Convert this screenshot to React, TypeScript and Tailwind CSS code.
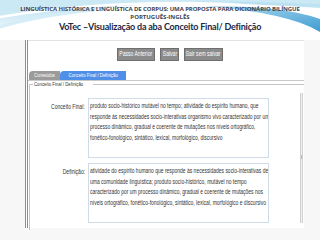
import React from 'react';

const sans = { fontFamily: '"Liberation Sans", Arial, sans-serif' };

const conceito = [
  'produto socio-histórico mutável no tempo; atividade do espírito humano, que',
  'responde às necessidades socio-interativas organismo vivo caracterizado por um',
  'processo dinâmico, gradual e coerente de mutações nos níveis ortográfico,',
  'fonético-fonológico, sintático, lexical, morfológico, discursivo',
];

const definicao = [
  'atividade do espírito humano que responde às necessidades socio-interativas de',
  'uma comunidade linguística; produto socio-histórico, mutável no tempo',
  'caracterizado por um processo dinâmico, gradual e coerente de mutações nos',
  'níveis ortográfico, fonético-fonológico, sintático, lexical, morfológico e discursivo',
];

const Wave = () => (
  <svg className="absolute inset-0" width="320" height="40" viewBox="0 0 320 40">
    <defs>
      <linearGradient id="lb" x1="0" y1="0" x2="0" y2="1">
        <stop offset="0" stopColor="#b5def0" />
        <stop offset="1" stopColor="#e8f5fb" />
      </linearGradient>
      <linearGradient id="rb" x1="0" y1="0" x2="1" y2="1">
        <stop offset="0" stopColor="#b3dcf0" />
        <stop offset="1" stopColor="#3f9dd3" />
      </linearGradient>
    </defs>
    <rect x="0" y="0" width="320" height="40" fill="#ffffff" />
    <path d="M0,0 H320 V8 Q200,0 120,6 Q50,12 0,28 Z" fill="url(#lb)" />
    <path d="M0,18 Q40,8 110,4 Q200,-1 320,4 V0 H0 Z" fill="#cbe8f5" />
    <path d="M0,17 Q90,2 190,3 Q270,4 320,15" fill="none" stroke="#ffffff" strokeWidth="2.5" />
    <path d="M205,6 Q285,6 320,19 V32 Q290,13 205,6 Z" fill="url(#rb)" />
    <path d="M0,27 Q40,15 95,10" fill="none" stroke="#d4edf8" strokeWidth="3" />
  </svg>
);

const Field = ({ label, lines }: { label: string; lines: string[] }) => (
  <>
    <div className="relative h-[60px]">
      <span
        className="absolute right-[3px] top-[4px] whitespace-nowrap origin-right scale-x-[0.72] text-[7px] leading-[10px] text-[#333]"
        style={sans}
      >
        {label}
      </span>
    </div>
    <div className="relative h-[60px] overflow-hidden border border-[#cfdbe6] bg-white">
      <div className="absolute left-[1px] top-[2px]">
        {lines.map((l) => (
          <div
            key={l}
            className="whitespace-nowrap origin-left scale-x-[0.71] text-[7px] leading-[10.5px] text-[#333]"
            style={sans}
          >
            {l}
          </div>
        ))}
      </div>
    </div>
  </>
);

const Btn = ({ text, w }: { text: string; w: string }) => (
  <div className={`${w} h-[13px] flex items-center justify-center bg-[#8b8b8b] border border-[#6f6f6f]`}>
    <span className="whitespace-nowrap scale-x-[0.72] text-white text-[7px]" style={sans}>
      {text}
    </span>
  </div>
);

export default function App() {
  return (
    <div className="relative w-[320px] h-[240px] overflow-hidden bg-[#f7f7f7]">
      <div className="relative h-[40px] bg-white">
        <Wave />
        <div className="relative flex flex-col items-center pt-[5px]">
          <div className="text-[6px] leading-[8px] font-bold text-[#3b3f52] tracking-[-0.1px]" style={{ fontFamily: '"Open Sans", sans-serif' }}>
            LINGUÍSTICA HISTÓRICA E LINGUÍSTICA DE CORPUS: UMA PROPOSTA PARA DICIONÁRIO BILÍNGUE
          </div>
          <div className="text-[6px] leading-[8px] font-bold text-[#3b3f52]" style={{ fontFamily: '"Open Sans", sans-serif' }}>
            PORTUGUÊS-INGLÊS
          </div>
          <div className="text-[9px] leading-[12px] font-bold text-[#1b2846] tracking-[-0.2px]" style={{ fontFamily: 'Lato, sans-serif' }}>
            VoTec –Visualização da aba Conceito Final/ Definição
          </div>
        </div>
      </div>

      <div className="relative ml-[25px] w-[279px] h-[188px] bg-white border-l-[3px] border-double border-[#8d8d8d]">
        <div className="h-[2px] border-t border-[#e2e2e2]" />
        <div className="flex gap-[5px] pl-[89px] pt-[6px]">
          <Btn text="Passo Anterior" w="w-[38px]" />
          <Btn text="Salvar" w="w-[19px]" />
          <Btn text="Sair sem salvar" w="w-[39px]" />
        </div>
        <div className="flex mt-[10px] pl-[1px] border-b border-[#c9c9c9]">
          <div className="h-[9px] w-[31px] flex items-center justify-center bg-[#9b9b9b] rounded-tl-[4px]">
            <span className="whitespace-nowrap scale-x-[0.72] text-white text-[6px]" style={sans}>
              Conteúdos
            </span>
          </div>
          <div className="h-[9px] w-[66px] flex items-center justify-center bg-[#4f8fe8] rounded-tl-[4px]">
            <span className="whitespace-nowrap scale-x-[0.72] text-white text-[6px]" style={sans}>
              Conceito Final / Definição
            </span>
          </div>
        </div>
        <div className="relative ml-[1px] mt-[3px] h-[146px] border-l border-t border-[#c4c4c4]">
          <div className="absolute -top-[4px] left-[3px] bg-white px-[1px] w-[60px] h-[7px]">
            <span className="absolute left-[1px] top-0 whitespace-nowrap origin-left scale-x-[0.72] text-[6px] leading-[7px] text-[#333]" style={sans}>
              Conceito Final / Definição
            </span>
          </div>
          <div className="grid grid-cols-[58px_181px] gap-y-[5px] pt-[13px]">
            <Field label="Conceito Final:" lines={conceito} />
            <Field label="Definição:" lines={definicao} />
          </div>
        </div>
        <div className="absolute right-[1px] top-[53px] w-[3px] h-[130px] border-x border-[#d0d0d0] bg-[#f2f2f2]">
          <div className="absolute top-[62px] left-0 w-full h-[4px] bg-[#bdbdbd]" />
        </div>
      </div>
    </div>
  );
}
